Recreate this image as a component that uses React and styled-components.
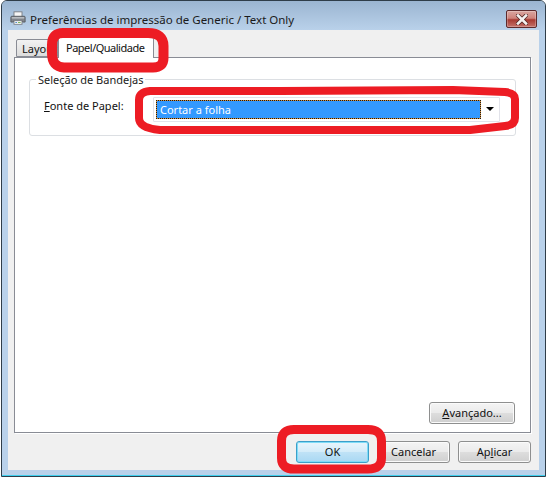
import React from 'react';
import styled, { createGlobalStyle } from 'styled-components';

const GlobalStyle = createGlobalStyle`
  html, body {
    margin: 0;
    padding: 0;
    background: #fff;
  }
`;

const Window = styled.div`
  position: relative;
  box-sizing: border-box;
  width: 545px;
  height: 477px;
  margin-left: 1px;
  display: flex;
  flex-direction: column;
  padding: 0 6px 6px 6px;
  background: #b9d1ea;
  border: 1px solid #2f3d49;
  border-radius: 6px 6px 0 0;
  box-shadow: inset 0 -1px 0 #3fd0ee;
  font-family: "Noto Sans", "Open Sans", sans-serif;
  font-size: 11px;
  color: #111;
`;

const TitleBar = styled.div`
  height: 29px;
  margin: 0 -6px;
  padding: 6px 8px 0 8px;
  box-sizing: border-box;
  flex: none;
  display: flex;
  align-items: center;
  gap: 4px;
  border-radius: 5px 5px 0 0;
  background: linear-gradient(#9bb5d1, #b9d1ea);
`;

const TitleText = styled.span`
  flex: 1;
  margin-top: 2px;
  font-size: 11.5px;
  color: #1a1a1a;
`;

const CloseButton = styled.div`
  box-sizing: border-box;
  width: 31px;
  height: 18px;
  margin-top: 1px;
  display: flex;
  align-items: center;
  justify-content: center;
  border: 1px solid #5d2a2c;
  border-radius: 2px;
  background: linear-gradient(#d9a6a0 0%, #cf837b 45%, #a83a32 55%, #c4726a 100%);
  box-shadow: inset 0 0 0 1px rgba(255, 255, 255, 0.25);
`;

const Client = styled.div`
  flex: 1;
  display: flex;
  flex-direction: column;
  padding: 7px 8px 0 6px;
  background: #f0f0f0;
`;

const TabRow = styled.div`
  height: 20px;
  flex: none;
  display: flex;
  align-items: flex-end;
  padding-left: 2px;
`;

const Tab = styled.div`
  box-sizing: border-box;
  height: ${(p) => (p.$active ? '21px' : '18px')};
  width: ${(p) => (p.$active ? '96px' : '42px')};
  margin-bottom: ${(p) => (p.$active ? '-1px' : '0')};
  padding-left: ${(p) => (p.$active ? '7px' : '5px')};
  line-height: ${(p) => (p.$active ? '19px' : '18px')};
  letter-spacing: ${(p) => (p.$active ? '-0.5px' : '0')};
  border: 1px solid #898c95;
  border-bottom: ${(p) => (p.$active ? 'none' : '1px solid #898c95')};
  background: ${(p) => (p.$active ? '#fff' : 'linear-gradient(#f2f2f2, #dcdcdc)')};
  border-radius: 2px 2px 0 0;
  white-space: nowrap;
  position: relative;
  z-index: 1;
`;

const Panel = styled.div`
  box-sizing: border-box;
  width: 517px;
  height: 376px;
  flex: none;
  display: flex;
  flex-direction: column;
  padding: 21px 15px 8px 14px;
  background: #fff;
  border: 1px solid #898c95;
  box-shadow: 1px 1px 0 #fff;
`;

const Group = styled.div`
  position: relative;
  box-sizing: border-box;
  width: 487px;
  height: 57px;
  padding: 17px 15px 0 14px;
  display: flex;
  align-items: flex-start;
  border: 1px solid #dcdfe3;
  border-radius: 3px;
`;

const Legend = styled.span`
  position: absolute;
  left: 6px;
  top: -8px;
  padding: 0 2px;
  line-height: 16px;
  background: #fff;
  color: #1a1a1a;
`;

const FieldLabel = styled.label`
  width: 109px;
  flex: none;
  margin-top: 1px;
  line-height: 16px;
`;

const Select = styled.div`
  box-sizing: border-box;
  width: 347px;
  height: 25px;
  display: flex;
  align-items: center;
  padding: 0 0 0 2px;
  border: 1px solid #e2e3ea;
  border-radius: 1px;
  background: #fff;
`;

const SelectValue = styled.div`
  box-sizing: border-box;
  width: 325px;
  height: 19px;
  padding-left: 3px;
  line-height: 17px;
  color: #fff;
  background: #3399ff;
  border: 1px solid #d9913a;
  outline: 1px dotted #1a1a1a;
  outline-offset: -1px;
`;

const SelectArrow = styled.div`
  flex: 1;
  display: flex;
  justify-content: center;
`;

const Spacer = styled.div`
  flex: 1;
`;

const ButtonRow = styled.div`
  display: flex;
  justify-content: flex-end;
  gap: 8px;
  margin: ${(p) => (p.$footer ? '8px 0 0' : '0')};
`;

const Button = styled.div`
  box-sizing: border-box;
  width: ${(p) => p.$width || 73}px;
  height: 22px;
  padding-bottom: 1px;
  display: flex;
  align-items: center;
  justify-content: center;
  border: 1px solid ${(p) => (p.$primary ? '#3c9fc9' : '#8e8f8f')};
  border-radius: 3px;
  background: ${(p) =>
    p.$primary
      ? 'linear-gradient(#e9f5fc 0%, #d4ecf9 48%, #bfe2f6 52%, #a9d8f3 100%)'
      : 'linear-gradient(#f4f4f4 0%, #ebebeb 48%, #dddddd 52%, #cfcfcf 100%)'};
  box-shadow: inset 0 0 0 1px ${(p) => (p.$primary ? '#7fdcf7' : '#fbfbfb')};
  color: #111;
`;

const Key = styled.span`
  text-decoration: underline;
`;

const Scribble = styled.svg`
  position: absolute;
  left: -2px;
  top: -1px;
  width: 547px;
  height: 478px;
  pointer-events: none;
  z-index: 5;
`;

const PrinterIcon = () => (
  <svg width="16" height="15" viewBox="0 0 18 16">
    <rect x="4.5" y="0.5" width="9" height="6" fill="#f6f6f6" stroke="#777b80" />
    <path d="M2 5.5h14a1 1 0 0 1 1 1v5.5h-3v-1H4v1H1V6.5a1 1 0 0 1 1-1z" fill="#82868d" stroke="#55595f" />
    <rect x="2" y="6.5" width="14" height="1.5" fill="#c4c7cc" />
    <rect x="4.5" y="10.5" width="9" height="4" fill="#fdfdfd" stroke="#777b80" />
    <path d="M6 12.5h2" stroke="#3f7fc4" />
    <path d="M9 12.5h3" stroke="#6fb04a" />
  </svg>
);

const CloseGlyph = () => (
  <svg width="14" height="11" viewBox="0 0 14 11">
    <path d="M3 1.5 L11 9.5 M11 1.5 L3 9.5" stroke="#4f2422" strokeWidth="4" strokeLinecap="round" />
    <path d="M3 1.5 L11 9.5 M11 1.5 L3 9.5" stroke="#f4f1f0" strokeWidth="2.6" strokeLinecap="square" />
  </svg>
);

const App = () => (
  <>
    <GlobalStyle />
    <Window>
      <TitleBar>
        <PrinterIcon />
        <TitleText>Preferências de impressão de Generic / Text Only</TitleText>
        <CloseButton>
          <CloseGlyph />
        </CloseButton>
      </TitleBar>
      <Client>
        <TabRow>
          <Tab>Layout</Tab>
          <Tab $active>Papel/Qualidade</Tab>
        </TabRow>
        <Panel>
          <Group>
            <Legend>Seleção de Bandejas</Legend>
            <FieldLabel>
              <Key>F</Key>onte de Papel:
            </FieldLabel>
            <Select>
              <SelectValue>Cortar a folha</SelectValue>
              <SelectArrow>
                <svg width="9" height="5" viewBox="0 0 9 5">
                  <path d="M0 0h8L4 4z" fill="#000" />
                </svg>
              </SelectArrow>
            </Select>
          </Group>
          <Spacer />
          <ButtonRow>
            <Button $width={86}>
              <span>
                <Key>A</Key>vançado...
              </span>
            </Button>
          </ButtonRow>
        </Panel>
        <ButtonRow $footer>
          <Button $primary>OK</Button>
          <Button>Cancelar</Button>
          <Button>
            <span>
              Ap<Key>l</Key>icar
            </span>
          </Button>
        </ButtonRow>
      </Client>
      <Scribble viewBox="0 0 547 478">
        <g fill="none" stroke="#ed1c24" strokeLinejoin="round">
          <path d="M64 67.5 Q52 67 52 53 L52 45 Q52 33 63 33 L148 33 Q163.5 33 163.5 46 L163.5 58 Q163.5 67.5 153 67.5 Z" strokeWidth="10" />
          <path d="M150 91 L280 91 L453 90 L505 92 Q515 93 515 99 L515 118 Q515 125 505 126 L470 130 L300 130 L160 130 Q139 128 139 118 L139 100 Q139 92 150 91 Z" strokeWidth="8" />
          <path d="M294 429.5 L368 429.5 Q381.5 429.5 381.5 441 L381.5 458 Q381.5 469 368 469 L294 469 Q281.5 469 281.5 458 L281.5 441 Q281.5 429.5 294 429.5 Z" strokeWidth="9" />
        </g>
      </Scribble>
    </Window>
  </>
);

export default App;
